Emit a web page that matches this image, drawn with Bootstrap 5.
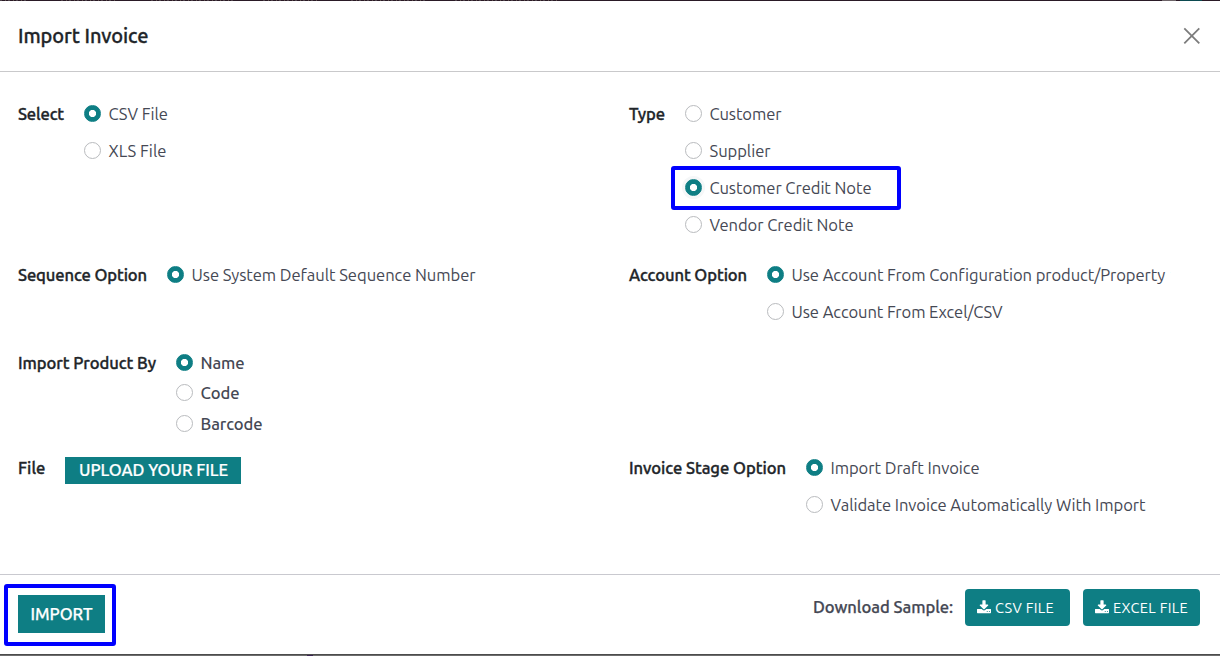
<!DOCTYPE html>
<html lang="en">
<head>
<meta charset="utf-8">
<title>Import Invoice</title>
<link href="https://cdn.jsdelivr.net/npm/bootstrap@5.3.0/dist/css/bootstrap.min.css" rel="stylesheet">
<style>
body{font-family:Ubuntu,"Noto Sans",sans-serif;font-size:16.6px;line-height:24px;color:#454854;height:656px;overflow:hidden;background:#fff}
.page-top{height:1px;background:#2a1a26;flex:none}
.page-top i{height:1px;display:block;opacity:.55;background:repeating-linear-gradient(90deg,#6d6468 0 2px,#2a1a26 2px 5px,#87796f 5px 6px,#2a1a26 6px 8px)}
.page-top .seg-gray{width:14px;margin-left:605px;background:#6d6468;opacity:1}
.page-top .seg-teal{width:22px;margin-left:4px;background:#0c4a50;opacity:1}
.page-bottom{height:2px;background:#6d6d6d;border-top:1px solid #4c4c4c;flex:none}
.page-bottom i{display:block;width:6px;height:1px;margin-left:307px;background:#3b2352}
.dlg-head{height:71px;border-bottom:1px solid #c9c9cb;padding:0 20px 1px 18px}
.dlg-title{font-size:20px;font-weight:500;-webkit-text-stroke:.3px #212529;color:#212529;line-height:28px}
.dlg-body{height:502px;padding:24px 18px 0;display:grid;grid-template-columns:611px 1fr;grid-template-rows:161px 88px 105px 1fr}
.dlg-foot{height:80px;border-top:1px solid #c9c9cf;padding:0 20px 0 18px}
.fld{display:flex;align-items:flex-start;gap:19.5px}
.fld-name{font-weight:500;-webkit-text-stroke:.35px #212529;color:#212529;line-height:36px}
.opt{height:37px;display:flex;align-items:center;gap:8px;position:relative;padding-bottom:1px}
.tight .opt{height:30.5px}
.tight{padding-top:3px;font-weight:500}
.opt .form-check-input{width:17px;height:17px;margin:-1px 0 0;border:1px solid #b9bbbe;box-shadow:none;flex:none}
.opt .form-check-input:checked{background:radial-gradient(circle,#fff 0 3.2px,#0e7e84 4px);border-color:#0e7e84}
.opt .halo:checked{box-shadow:0 0 0 3px #f5f7f8}
.fit{white-space:nowrap;display:inline-block}
.btn-teal{--bs-btn-color:#fff;--bs-btn-bg:#0e7e84;--bs-btn-border-color:#0e7e84;--bs-btn-hover-color:#fff;--bs-btn-hover-bg:#0b6b70;padding:0;border:0;font-size:16.6px}
.btn-upload{width:176px;height:27px;margin-top:7px;font-weight:500;line-height:24px;padding:0 0 1px 1px;-webkit-text-stroke:.2px #fff}
.btn-import{width:87px;height:38px;margin-top:20px;font-weight:500;-webkit-text-stroke:.25px #fff}
.btn-dl{height:37px;font-size:14.6px;padding:1px 12px 0;display:flex;align-items:center;gap:4px;border-radius:4px}
.btn-csv{padding-right:16px}
.btn-excel{margin-left:13px}
.btn-dl svg{width:14px;height:14px;margin-top:-3px;flex:none}
.dl-group{margin-top:14px}
.dl-name{font-weight:500;-webkit-text-stroke:.25px #454854;margin-top:-2px;margin-right:12px}
.frame{position:absolute;border:4px solid #00f;border-radius:3px;pointer-events:none}
.frame-opt{left:-13.5px;top:-4px;width:230px;height:44px}
.frame-import{left:-14px;top:9px;width:112px;height:62px}
</style>
</head>
<body class="d-flex flex-column">
<div class="page-top d-flex"><i style="width:27px"></i><i style="width:56px;margin-left:34px"></i><i style="width:82px;margin-left:34px"></i><i style="width:56px;margin-left:30px"></i><i style="width:74px;margin-left:32px"></i><i style="width:102px;margin-left:30px"></i><i class="seg-gray"></i><i class="seg-teal"></i></div>
<header class="dlg-head d-flex align-items-center justify-content-between">
  <h4 class="dlg-title mb-0 fit" data-w="130.5">Import Invoice</h4>
  <svg width="17" height="17" viewBox="0 0 17 17" aria-label="Close"><path d="M1.3 1.3L16.3 16.3M16.3 1.3L1.3 16.3" stroke="#7c7c7c" stroke-width="1.8" fill="none"/></svg>
</header>
<main class="dlg-body">
  <div class="fld"><span class="fld-name fit" data-w="46">Select</span><div>
    <label class="opt"><input class="form-check-input" type="radio" name="a" checked><span class="fit" data-w="59.5">CSV File</span></label>
    <label class="opt"><input class="form-check-input" type="radio" name="a"><span class="fit" data-w="58">XLS File</span></label></div></div>
  <div class="fld"><span class="fld-name fit" data-w="36">Type</span><div>
    <label class="opt"><input class="form-check-input" type="radio" name="b"><span class="fit" data-w="72">Customer</span></label>
    <label class="opt"><input class="form-check-input" type="radio" name="b"><span class="fit" data-w="61">Supplier</span></label>
    <label class="opt"><input class="form-check-input halo" type="radio" name="b" checked><span class="fit" data-w="162">Customer Credit Note</span><span class="frame frame-opt"></span></label>
    <label class="opt"><input class="form-check-input" type="radio" name="b"><span class="fit" data-w="144">Vendor Credit Note</span></label></div></div>
  <div class="fld"><span class="fld-name fit" data-w="129">Sequence Option</span><div>
    <label class="opt"><input class="form-check-input" type="radio" name="c" checked><span class="fit" data-w="284">Use System Default Sequence Number</span></label></div></div>
  <div class="fld"><span class="fld-name fit" data-w="118">Account Option</span><div>
    <label class="opt"><input class="form-check-input" type="radio" name="d" checked><span class="fit" data-w="373">Use Account From Configuration product/Property</span></label>
    <label class="opt"><input class="form-check-input" type="radio" name="d"><span class="fit" data-w="211">Use Account From Excel/CSV</span></label></div></div>
  <div class="fld"><span class="fld-name fit" data-w="138">Import Product By</span><div class="tight">
    <label class="opt"><input class="form-check-input" type="radio" name="e" checked><span class="fit" data-w="44">Name</span></label>
    <label class="opt"><input class="form-check-input" type="radio" name="e"><span class="fit" data-w="39">Code</span></label>
    <label class="opt"><input class="form-check-input" type="radio" name="e"><span class="fit" data-w="62">Barcode</span></label></div></div>
  <div></div>
  <div class="fld"><span class="fld-name fit" data-w="27.5">File</span><button class="btn btn-teal btn-upload rounded-0"><span class="fit" data-w="149">UPLOAD YOUR FILE</span></button></div>
  <div class="fld"><span class="fld-name fit" data-w="157">Invoice Stage Option</span><div>
    <label class="opt"><input class="form-check-input" type="radio" name="f" checked><span class="fit" data-w="149">Import Draft Invoice</span></label>
    <label class="opt"><input class="form-check-input" type="radio" name="f"><span class="fit" data-w="315">Validate Invoice Automatically With Import</span></label></div></div>
</main>
<footer class="dlg-foot d-flex justify-content-between align-items-start">
  <div class="position-relative"><button class="btn btn-teal btn-import rounded-0"><span class="fit" data-w="62">IMPORT</span></button><span class="frame frame-import"></span></div>
  <div class="dl-group d-flex align-items-center">
    <span class="fit dl-name" data-w="140">Download Sample:</span>
    <button class="btn btn-teal btn-dl btn-csv"><svg viewBox="64 0 1664 1600" fill="#fff"><path d="M1344 1344q0-26-19-45t-45-19-45 19-19 45 19 45 45 19 45-19 19-45zm256 0q0-26-19-45t-45-19-45 19-19 45 19 45 45 19 45-19 19-45zm128-224v320q0 40-28 68t-68 28h-1472q-40 0-68-28t-28-68v-320q0-40 28-68t68-28h465l135 136q58 56 136 56t136-56l136-136h464q40 0 68 28t28 68zm-325-569q17 41-14 70l-448 448q-18 19-45 19t-45-19l-448-448q-31-29-14-70 17-39 59-39h256v-448q0-26 19-45t45-19h256q26 0 45 19t19 45v448h256q42 0 59 39z"/></svg><span class="fit" data-w="59">CSV FILE</span></button>
    <button class="btn btn-teal btn-dl btn-excel"><svg viewBox="64 0 1664 1600" fill="#fff"><path d="M1344 1344q0-26-19-45t-45-19-45 19-19 45 19 45 45 19 45-19 19-45zm256 0q0-26-19-45t-45-19-45 19-19 45 19 45 45 19 45-19 19-45zm128-224v320q0 40-28 68t-68 28h-1472q-40 0-68-28t-28-68v-320q0-40 28-68t68-28h465l135 136q58 56 136 56t136-56l136-136h464q40 0 68 28t28 68zm-325-569q17 41-14 70l-448 448q-18 19-45 19t-45-19l-448-448q-31-29-14-70 17-39 59-39h256v-448q0-26 19-45t45-19h256q26 0 45 19t19 45v448h256q42 0 59 39z"/></svg><span class="fit" data-w="75">EXCEL FILE</span></button>
  </div>
</footer>
<div class="page-bottom"><i></i></div>
<script src="https://cdn.jsdelivr.net/npm/bootstrap@5.3.0/dist/js/bootstrap.bundle.min.js"></script>
<script>
document.querySelectorAll('.fit').forEach(function (el) {
  var w = +el.dataset.w, natural = el.getBoundingClientRect().width;
  el.style.letterSpacing = ((w - natural) / el.textContent.length).toFixed(3) + 'px';
  el.style.width = w + 'px';
});
</script>
</body>
</html>
